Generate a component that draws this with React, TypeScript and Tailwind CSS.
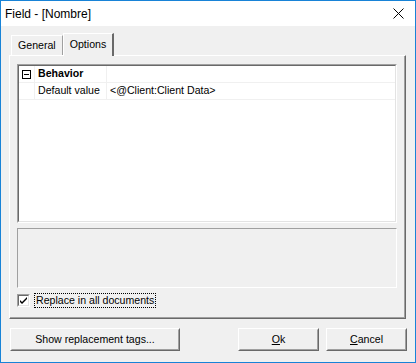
import React from "react";

const font = { fontFamily: '"Liberation Sans", Arial, sans-serif' };

function Btn({ children, w }: { children: React.ReactNode; w: string }) {
  return (
    <div className={`${w} h-[23px] border border-t-white border-l-white border-r-[#696969] border-b-[#696969] bg-[#f0f0f0]`}>
      <div className="w-full h-full border border-r-[#a0a0a0] border-b-[#a0a0a0] border-t-[#f0f0f0] border-l-[#f0f0f0] flex items-center justify-center text-[10.6px] text-black">
        {children}
      </div>
    </div>
  );
}

export default function App() {
  return (
    <div className="w-[416px] h-[363px] border border-[#1883d7] bg-[#f0f0f0] flex flex-col text-black" style={font}>
      {/* title bar */}
      <div className="h-[25px] bg-white flex items-center justify-between pl-[4px] pr-[11px]">
        <span className="text-[12px]">Field - [Nombre]</span>
        <svg width="11" height="11" viewBox="0 0 11 11">
          <path d="M0.5 0.5 L10.5 10.5 M10.5 0.5 L0.5 10.5" stroke="#000" strokeWidth="1" />
        </svg>
      </div>

      {/* tabs */}
      <div className="flex items-end pl-[10px] mt-[7px] h-[22px]">
        <div className="h-[20px] px-[6px] flex items-center text-[10.6px] border border-b-0 border-t-white border-l-white border-r-[#a0a0a0] bg-[#f0f0f0]">
          General
        </div>
        <div className="h-[23px] -mb-[1px] px-[6px] flex items-start pt-[3px] text-[10.6px] border-t border-l border-t-white border-l-white border-r-2 border-r-[#696969] bg-[#f0f0f0] relative z-10">
          Options
        </div>
      </div>

      {/* tab pane */}
      <div className="ml-[8px] w-[397px] h-[264px] border-t border-l border-t-white border-l-white border-r border-b border-r-[#696969] border-b-[#696969]">
        <div className="w-full h-full border-r border-b border-r-[#a0a0a0] border-b-[#a0a0a0] flex flex-col px-[7px] pt-[8px]">
          {/* property grid */}
          <div className="h-[159px] border border-t-[#a0a0a0] border-l-[#a0a0a0] border-r-white border-b-white">
            <div className="w-full h-full border border-t-[#696969] border-l-[#696969] border-r-[#e3e3e3] border-b-[#e3e3e3] bg-white">
              <div className="flex h-[17px] border-b border-[#f0f0f0] text-[10.6px]">
                <div className="w-[16px] border-r border-[#f0f0f0] flex items-center justify-center">
                  <div className="w-[9px] h-[9px] border border-[#000] flex items-center justify-center">
                    <div className="w-[5px] h-[1px] bg-black" />
                  </div>
                </div>
                <div className="w-[72px] border-r border-[#f0f0f0] pl-[3px] flex items-center font-bold">Behavior</div>
                <div className="flex-1" />
              </div>
              <div className="flex h-[17px] border-b border-[#f0f0f0] text-[10.6px]">
                <div className="w-[16px] border-r border-[#f0f0f0]" />
                <div className="w-[72px] border-r border-[#f0f0f0] pl-[3px] flex items-center">Default value</div>
                <div className="flex-1 pl-[3px] flex items-center">&lt;@Client:Client Data&gt;</div>
              </div>
            </div>
          </div>

          {/* description */}
          <div className="mt-[5px] h-[60px] border border-t-[#a0a0a0] border-l-[#a0a0a0] border-r-white border-b-white bg-[#f0f0f0]" />

          {/* checkbox */}
          <div className="mt-[5px] flex items-center gap-[4px]">
            <div className="w-[13px] h-[13px] border border-t-[#a0a0a0] border-l-[#a0a0a0] border-r-white border-b-white">
              <div className="w-full h-full border border-t-[#696969] border-l-[#696969] border-r-[#e3e3e3] border-b-[#e3e3e3] bg-white flex items-center justify-center">
                <svg width="7" height="7" viewBox="0 0 7 7">
                  <path d="M0 3 L2 5 L7 0 L7 2 L2 7 L0 5 Z" fill="#000" />
                </svg>
              </div>
            </div>
            <div className="text-[10.6px] px-[1px] h-[15px] flex items-center border border-dotted border-black">
              Replace in all documents
            </div>
          </div>
        </div>
      </div>

      {/* buttons */}
      <div className="flex mt-[9px] pl-[9px] pr-[8px]">
        <Btn w="w-[170px]">Show replacement tags...</Btn>
        <div className="flex-1" />
        <Btn w="w-[81px]">
          <span><span className="underline">O</span>k</span>
        </Btn>
        <div className="w-[7px]" />
        <Btn w="w-[81px]">
          <span><span className="underline">C</span>ancel</span>
        </Btn>
      </div>
    </div>
  );
}
